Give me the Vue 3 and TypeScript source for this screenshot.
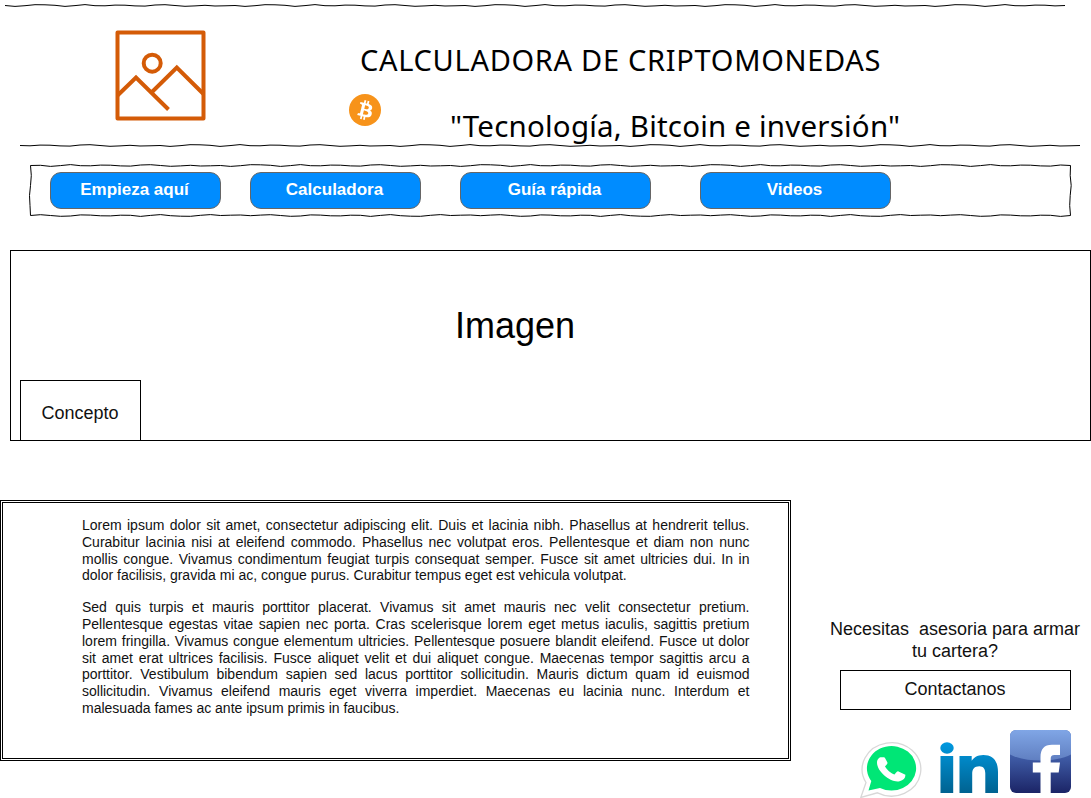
<script setup lang="ts">
interface NavItem {
  label: string
  size: 'narrow' | 'wide'
}

const navItems: NavItem[] = [
  { label: 'Empieza aquí', size: 'narrow' },
  { label: 'Calculadora', size: 'narrow' },
  { label: 'Guía rápida', size: 'wide' },
  { label: 'Videos', size: 'wide' },
]

// Hand-drawn stroke: one vertex about every 10px, shifted by up to 1px.
const jitter = [0, 0.9, 0.2, -0.8, -0.7, -0.2, 0.9, 0.1, -0.9, 0.2, 0.3, -0.4, -0.3, 0.4, 0.6, -0.5, -0.8, 0, 0.8, 0.4, -0.2, 0.5, 0.3]

function sketch(x1: number, y1: number, x2: number, y2: number, shift: number): string {
  const length = Math.hypot(x2 - x1, y2 - y1)
  const steps = Math.round(length / 10)
  const nx = -(y2 - y1) / length
  const ny = (x2 - x1) / length
  const points: string[] = []
  for (let i = 0; i <= steps; i++) {
    const t = i / steps
    const d = i === 0 || i === steps ? 0 : jitter[(i + shift) % jitter.length]
    points.push(`${(x1 + (x2 - x1) * t + nx * d).toFixed(2)},${(y1 + (y2 - y1) * t + ny * d).toFixed(2)}`)
  }
  return points.join(' ')
}

const topRule = sketch(0, 5.5, 1060, 5.5, 0)
const bottomRule = sketch(0, 5.5, 1060, 5.5, 9)
const navFrame = [
  sketch(2.5, 5.5, 1042.5, 5.5, 4),
  '1042.5,5.5 1042.2,15.5 1043.2,25.5 1042.2,35.5 1041.7,45.5 1042.5,55.5',
  sketch(1042.5, 55.5, 2.5, 55.5, 7),
  '2.5,5.5 3.3,15.5 2.5,25.5 1.5,35.5 2,45.5 2.5,55.5',
]
</script>

<template>
  <div class="page">
    <svg class="rule rule-top" width="1062" height="10"><polyline :points="topRule" /></svg>
    <header class="header">
      <svg class="logo" width="91" height="91" viewBox="0 0 91 91">
        <g fill="none" stroke="#d45b07" stroke-width="4">
          <rect x="2.5" y="2.5" width="86" height="86" stroke-linejoin="round" />
          <circle cx="37.2" cy="33.2" r="8.5" />
          <path d="M2.5 65.5 21 47.5 53.5 79.5M36.500 62.500 61.800 37.500 88.500 64" />
        </g>
      </svg>
      <div class="brand">
        <h1 class="title">CALCULADORA DE CRIPTOMONEDAS</h1>
        <div class="tagline">
          <svg class="coin" width="32" height="32" viewBox="0 0 32 32">
            <circle cx="16" cy="16" r="16" fill="#f7931a" />
            <path fill="#fff" d="M23.189 14.02c.314-2.096-1.283-3.223-3.465-3.975l.708-2.840-1.728-.43-.69 2.765c-.454-.114-.920-.220-1.385-.326l.695-2.783L15.596 6l-.708 2.839c-.376-.086-.746-.170-1.104-.260l.002-.009-2.384-.595-.460 1.846s1.283.294 1.256.312c.700.175.826.638.805 1.006l-.806 3.235c.048.012.110.030.180.057l-.183-.045-1.130 4.532c-.086.212-.303.531-.793.410.018.025-1.256-.313-1.256-.313l-.858 1.978 2.250.561c.418.105.828.215 1.231.318l-.715 2.872 1.727.430.708-2.840c.472.127.930.245 1.378.357l-.706 2.828 1.728.430.715-2.866c2.948.558 5.164.333 6.097-2.333.752-2.146-.037-3.385-1.588-4.192 1.130-.260 1.980-1.003 2.207-2.538zm-3.950 5.538c-.533 2.147-4.148.986-5.320.695l.950-3.805c1.172.293 4.929.872 4.370 3.110zm.535-5.569c-.487 1.953-3.495.960-4.470.717l.860-3.450c.975.243 4.118.696 3.610 2.733z" />
          </svg>
          <p class="slogan">"Tecnología, Bitcoin e inversión"</p>
        </div>
      </div>
    </header>
    <svg class="rule rule-bottom" width="1062" height="10"><polyline :points="bottomRule" /></svg>

    <nav class="nav">
      <svg class="nav-frame" width="1045" height="60">
        <polyline v-for="(side, i) in navFrame" :key="i" :points="side" />
      </svg>
      <button v-for="item in navItems" :key="item.label" class="nav-button" :class="item.size" type="button">
        {{ item.label }}
      </button>
    </nav>

    <section class="hero">
      <div class="hero-title">Imagen</div>
      <div class="concept">Concepto</div>
    </section>

    <main class="main">
      <article class="article">
        <p>Lorem ipsum dolor sit amet, consectetur adipiscing elit. Duis et lacinia nibh. Phasellus at hendrerit tellus. Curabitur lacinia nisi at eleifend commodo. Phasellus nec volutpat eros. Pellentesque et diam non nunc mollis congue. Vivamus condimentum feugiat turpis consequat semper. Fusce sit amet ultricies dui. In in dolor facilisis, gravida mi ac, congue purus. Curabitur tempus eget est vehicula volutpat.</p>
        <p>Sed quis turpis et mauris porttitor placerat. Vivamus sit amet mauris nec velit consectetur pretium. Pellentesque egestas vitae sapien nec porta. Cras scelerisque lorem eget metus iaculis, sagittis pretium lorem fringilla. Vivamus congue elementum ultricies. Pellentesque posuere blandit eleifend. Fusce ut dolor sit amet erat ultrices facilisis. Fusce aliquet velit et dui aliquet congue. Maecenas tempor sagittis arcu a porttitor. Vestibulum bibendum sapien sed lacus porttitor sollicitudin. Mauris dictum quam id euismod sollicitudin. Vivamus eleifend mauris eget viverra imperdiet. Maecenas eu lacinia nunc. Interdum et malesuada fames ac ante ipsum primis in faucibus.</p>
      </article>

      <aside class="contact">
        <p class="question">Necesitas&nbsp; asesoria para armar<br />tu cartera?</p>
        <button class="contact-button" type="button">Contactanos</button>
        <div class="social">
          <svg class="whatsapp" width="62" height="57" viewBox="0 0 62 57">
            <path d="M.8 56.500 6 41.500A29.300 26.700 0 1 1 17.500 51.800Z" fill="#fff" stroke="#d8d8d8" stroke-width="1.300" />
            <path d="M8.500 49.500 11.300 40A24.600 22.300 0 1 1 20 47Z" fill="#00e676" />
            <path d="M21.500 16.200C19.500 16 17 18 17 21.500C17 31 31 42 39.500 40.200C43.500 39.500 45.500 37 45.400 33.800L38.500 30.400C37.500 30 36.800 30.500 34.500 33.500C31 32.500 26.500 28.500 25 25.300C27.500 23 27.800 22.400 27.300 21.200L25 16.900C24.500 16.100 23 16.200 21.500 16.200Z" fill="#fff" />
          </svg>
          <svg class="linkedin" width="60" height="52" viewBox="0 0 60 52">
            <defs>
              <linearGradient id="in-blue" gradientUnits="userSpaceOnUse" x1="0" y1="0" x2="0" y2="52">
                <stop offset="0" stop-color="#0099e0" />
                <stop offset="1" stop-color="#00618f" />
              </linearGradient>
            </defs>
            <g fill="url(#in-blue)">
              <ellipse cx="7" cy="6" rx="6.700" ry="5.700" />
              <path d="M.5 14H13.200V51H.5ZM19.500 14H31.700V18.800C33.500 15.800 37 13 43.300 13C53 13 58 19 58 30V51H45.300V31.500C45.300 27 43.500 24.200 39.300 24.200C34.500 24.200 32.200 27 32.200 31.500V51H19.500Z" />
            </g>
          </svg>
          <svg class="facebook" width="61" height="63" viewBox="0 0 61 63">
            <defs>
              <linearGradient id="fb-blue" x1="0" y1="0" x2="0" y2="1">
                <stop offset="0" stop-color="#5271b8" />
                <stop offset="0.450" stop-color="#3e5aa4" />
                <stop offset="1" stop-color="#1b2466" />
              </linearGradient>
              <linearGradient id="fb-gloss" x1="0" y1="0" x2="0" y2="1">
                <stop offset="0" stop-color="#80a6e6" />
                <stop offset="1" stop-color="#607fc1" />
              </linearGradient>
            </defs>
            <rect width="61" height="63" rx="6" fill="url(#fb-blue)" />
            <path d="M0 24.500V6A6 6 0 0 1 6 0H55A6 6 0 0 1 61 6V24.500C45 32.500 16 32.500 0 24.500Z" fill="url(#fb-gloss)" />
            <path d="M30.500 63V42.500H22.800V32.500H30.500V27.500C30.500 19 34 14.700 42 14.700H50V25H44.500C41.500 25 40.700 26.500 40.700 29V32.500H50L48.700 42.500H40.700V63Z" fill="#fff" />
          </svg>
        </div>
      </aside>
    </main>
  </div>
</template>

<style>
body {
  margin: 0;
  background: #fff;
}
</style>

<style scoped>
.page {
  box-sizing: border-box;
  width: 1091px;
  height: 798px;
  overflow: hidden;
  display: flex;
  flex-direction: column;
  color: #111;
  font-family: "Liberation Sans", Arial, Helvetica, sans-serif;
}
.page p,
.page h1 {
  margin: 0;
}
.rule,
.nav-frame {
  display: block;
  flex: none;
  fill: none;
  stroke: #000;
  stroke-width: 1;
}
.rule-top {
  margin-left: 5px;
}
.rule-bottom {
  margin-left: 20px;
}
.header {
  height: 130px;
  display: flex;
  align-items: flex-start;
}
.logo {
  margin: 20px 143px 0 115px;
  flex: none;
}
.brand {
  white-space: nowrap;
  color: #000;
  font-family: "Noto Sans", Verdana, sans-serif;
  font-size: 30px;
  line-height: 36px;
}
.page .brand .title {
  margin: 32px 0 0 11px;
  font-size: 29px;
  font-weight: 400;
  letter-spacing: 0.700px;
}
.tagline {
  display: flex;
  margin-top: 16px;
}
.page .slogan {
  padding: 14px 0 0 69px;
  font-size: 29.500px;
  letter-spacing: 0.200px;
}
.nav {
  position: relative;
  box-sizing: border-box;
  height: 60px;
  margin: 10px 20px 0 28px;
  padding: 12px 0 0 22px;
  display: flex;
  align-items: flex-start;
}
.nav-frame {
  position: absolute;
  inset: 0;
}
.nav-button {
  position: relative;
  box-sizing: border-box;
  height: 37px;
  padding: 0 2px 1px 0;
  border: 1px solid #666;
  border-radius: 11px;
  background: #008cff;
  color: #fff;
  font: bold 17px "Liberation Sans", Arial, sans-serif;
}
.narrow {
  width: 171px;
  margin-right: 29px;
}
.narrow + .narrow {
  margin-right: 39px;
}
.wide {
  width: 191px;
  margin-right: 49px;
}
.hero {
  box-sizing: border-box;
  height: 191px;
  margin: 30px 0 0 10px;
  border: 1px solid #000;
  display: flex;
  flex-direction: column;
}
.hero-title {
  flex: 1;
  padding: 53px 71px 0 0;
  color: #000;
  text-align: center;
  font-size: 36px;
  line-height: 43px;
}
.concept {
  box-sizing: border-box;
  width: 121px;
  height: 60px;
  margin-left: 9px;
  padding: 21px 1px 0 0;
  border: 1px solid #000;
  border-bottom: 0;
  text-align: center;
  font-size: 18px;
  line-height: 22px;
}
.main {
  display: flex;
  margin-top: 59px;
}
.article {
  box-sizing: border-box;
  flex: none;
  width: 791px;
  height: 261px;
  padding: 14px 38.500px 0 79px;
  border: 3px double #000;
  font-size: 14px;
  line-height: 16.800px;
  text-align: justify;
}
.article p + p {
  margin-top: 15px;
}
.contact {
  width: 260px;
  margin-left: 34px;
  padding-top: 118px;
}
.question {
  text-align: center;
  font-size: 18px;
  line-height: 22px;
}
.contact-button {
  display: block;
  box-sizing: border-box;
  width: 231px;
  height: 40px;
  margin: 8px 0 0 15px;
  padding: 0 1px 2px 0;
  border: 1px solid #000;
  background: #fff;
  color: #111;
  font: 18px "Liberation Sans", Arial, sans-serif;
}
.social {
  display: flex;
  margin: 20px 0 0 35px;
}
.whatsapp {
  margin: 11px 18px 0 0;
}
.linkedin {
  margin: 12px 10px 0 0;
}
.social svg {
  flex: none;
}
</style>
